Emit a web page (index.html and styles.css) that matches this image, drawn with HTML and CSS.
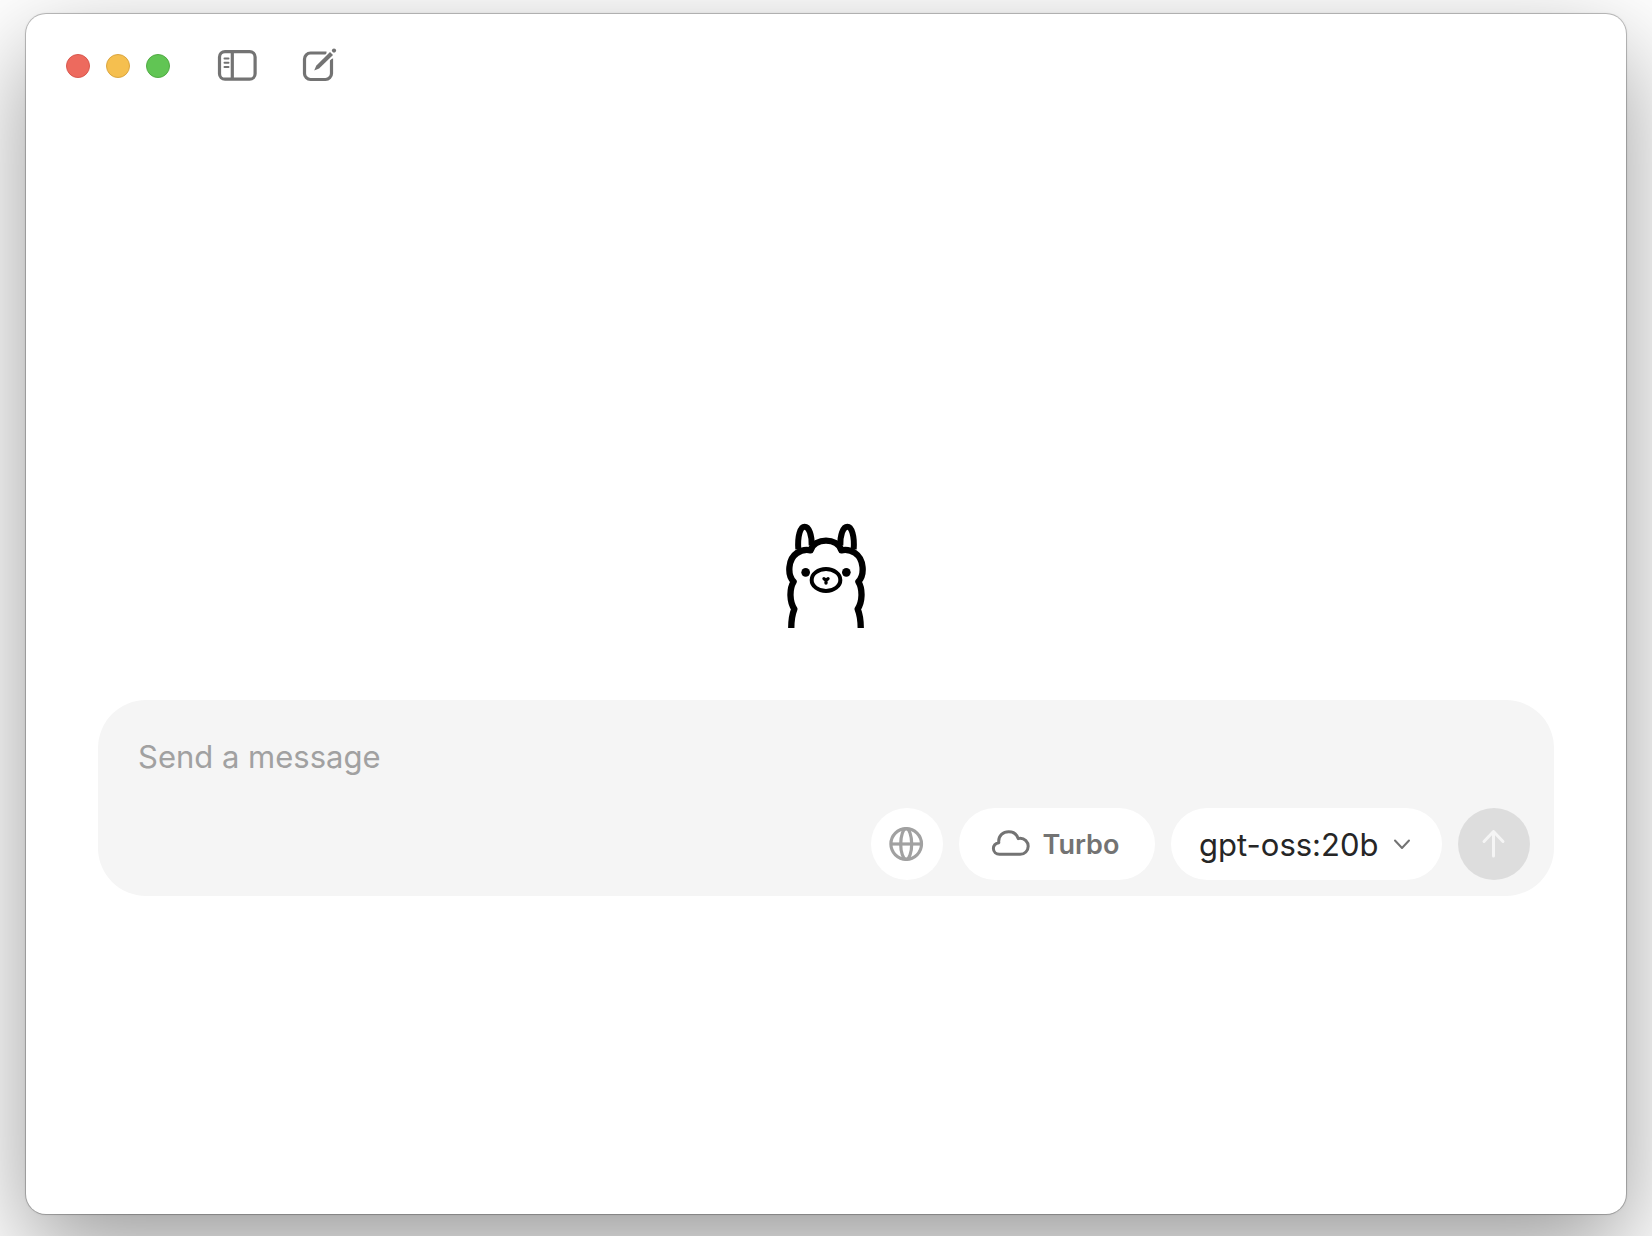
FILE: index.html
```
<!DOCTYPE html>
<html lang="en">
<head>
  <meta charset="UTF-8" />
  <meta name="viewport" content="width=device-width, initial-scale=1.0"/>
  <title>Ollama</title>
  <link rel="stylesheet" href="styles.css">
</head>
<body>

  <div class="window">
    <header class="titlebar">
      <div class="lights">
        <button class="light close" aria-label="Close"></button>
        <button class="light minimize" aria-label="Minimize"></button>
        <button class="light zoom" aria-label="Zoom"></button>
      </div>

      <button class="icon-btn sidebar-btn" aria-label="Toggle sidebar">
        <svg width="40" height="36" viewBox="0 0 40 36" fill="none" stroke="currentColor" stroke-width="3.2">
          <rect x="2.500" y="3.600" width="35.600" height="27.600" rx="5.500"/>
          <path d="M15.300 4v27"/>
          <path d="M7.500 10.500h4M7.500 14.700h4M7.500 19h4" stroke-width="2" stroke-linecap="round"/>
        </svg>
      </button>

      <button class="icon-btn" aria-label="New chat">
        <svg width="36" height="36" viewBox="0 0 36 36" fill="none" stroke="currentColor" stroke-width="3.2">
          <path d="M25.500 5H9.500a6 6 0 0 0-6 6v14.500a6 6 0 0 0 6 6h15a6 6 0 0 0 6-6V10.500"/>
          <path d="M13.500 22.300l2-4.300L30 2.500l4 4-16.800 14.300z" stroke="#fff" stroke-width="2.500" fill="#fff"/>
          <path d="M13.200 22.500l2-4.800L29 3.900l3 3-13.900 13.700z" fill="currentColor" stroke="none"/>
          <circle cx="33" cy="2.600" r="2.100" fill="currentColor" stroke="none"/>
        </svg>
      </button>
    </header>

    <main class="chat">
      <svg class="logo" width="82" height="106" viewBox="45 36 246 318" fill="none" stroke="#000" stroke-width="19" stroke-linejoin="round">
        <!-- ears -->
        <path d="M85 118C82 78 91 50 104 50C117 50 126 75 125 107" stroke-width="18"/>
        <path d="M251 118C254 78 245 50 232 50C219 50 210 75 211 107" stroke-width="18"/>
        <!-- wool -->
        <path d="M64 362C63 336 66 315 73 297C59 277 57 238 71 215C51 194 54 147 81 129C94 120 108 118 122 121C134 82 202 82 214 121C228 118 242 120 255 129C282 147 285 194 265 215C279 238 277 277 263 297C270 315 273 336 272 362"/>
        <!-- face -->
        <circle cx="107" cy="187" r="13" fill="#000" stroke="none"/>
        <circle cx="229" cy="187" r="13" fill="#000" stroke="none"/>
        <ellipse cx="168" cy="210" rx="43" ry="33" stroke-width="12"/>
        <path d="M162 206l6 5 6-5M168 211v8" stroke-width="10" stroke-linecap="round"/>
      </svg>

      <form class="composer">
        <textarea class="message" rows="1" placeholder="Send a message" aria-label="Message"></textarea>

        <div class="actions">
          <button type="button" class="pill round globe" aria-label="Web search">
            <svg width="36" height="36" viewBox="0 0 36 36" fill="none" stroke="currentColor" stroke-width="3.2">
              <circle cx="17.200" cy="18" r="15.300"/>
              <ellipse cx="17.200" cy="18" rx="5.500" ry="15.300"/>
              <path d="M2.200 18h30"/>
            </svg>
          </button>

          <button type="button" class="pill turbo">
            <svg width="40" height="32" viewBox="0 0 40 32" fill="none" stroke="currentColor" stroke-width="3" stroke-linejoin="round">
              <path d="M8.500 26.300H29.200a8 8 0 0 0 0-16c-.800 0-1.400.1-2 .3C25.800 6.200 22 3.700 17.700 3.700c-5.800 0-10 4-10 9.500 0 .6 0 1.100.1 1.500C4.600 15.300 2.400 17.600 2.400 20.600c0 3.300 2.700 5.700 6.100 5.700z"/>
            </svg>
            Turbo
          </button>

          <div class="model">
            <select class="pill model-select" aria-label="Model">
              <option>gpt-oss:20b</option>
            </select>
            <svg class="chevron" width="20" height="12" viewBox="0 0 20 12" fill="none" stroke="currentColor" stroke-width="2" stroke-linecap="round" stroke-linejoin="round">
              <path d="M3 2.500l7 7.500L17 2.500"/>
            </svg>
          </div>

          <button type="submit" class="pill round send" aria-label="Send" disabled>
            <svg width="28" height="32" viewBox="0 0 28 32" fill="none" stroke="currentColor" stroke-width="3" stroke-linecap="round" stroke-linejoin="round">
              <path d="M13.500 28V3.500M4 13.500l9.500-10 9.500 10"/>
            </svg>
          </button>
        </div>
      </form>
    </main>
  </div>

</body>
</html>
```
FILE: styles.css
```
* {
  box-sizing: border-box;
}

body {
  margin: 0;
  min-height: 100vh;
  padding: 14px 26px 22px;
  display: flex;
  overflow: hidden;
  background: #fff;
  font-family: Inter, "Liberation Sans", sans-serif;
}

button, select, textarea {
  font-family: inherit;
  border: none;
  margin: 0;
}

button {
  padding: 0;
}

.window {
  flex: 1;
  display: flex;
  flex-direction: column;
  background: #fff;
  border-radius: 20px;
  box-shadow: 0 0 0 1px rgba(0,0,0,0.2), 0 0 3px rgba(0,0,0,0.15), 0 36px 100px rgba(0,0,0,0.4);
}

.titlebar {
  display: flex;
  align-items: center;
  height: 104px;
  padding: 0 40px;
}

.lights {
  display: flex;
  gap: 16px;
}

.light {
  width: 24px;
  height: 24px;
  border-radius: 50%;
}

.close {
  background: #ed6a5e;
  border: 1px solid #d9584e;
}

.minimize {
  background: #f5bf4f;
  border: 1px solid #dba640;
}

.zoom {
  background: #61c554;
  border: 1px solid #51ab44;
}

.icon-btn {
  display: flex;
  background: none;
  color: #737373;
}

.sidebar-btn {
  margin: 0 44px 0 47px;
}

.chat {
  flex: 1;
  display: flex;
  flex-direction: column;
  align-items: center;
  justify-content: center;
  gap: 72px;
  padding: 86px 72px 0;
}

.composer {
  width: 100%;
  padding: 32px 24px 16px 40px;
  background: #f5f5f5;
  border-radius: 48px;
}

.message {
  display: block;
  width: 100%;
  height: 50px;
  padding: 0;
  margin-bottom: 26px;
  background: none;
  resize: none;
  outline: none;
  overflow: hidden;
  font-size: 31px;
  line-height: 50px;
}

.message::placeholder {
  color: #a1a1a1;
}

.actions {
  display: flex;
  justify-content: flex-end;
  gap: 16px;
}

.pill {
  display: flex;
  align-items: center;
  justify-content: center;
  height: 72px;
  background: #fff;
  border-radius: 36px;
}

.round {
  width: 72px;
}

.globe {
  color: #a1a1a1;
}

.turbo {
  gap: 12px;
  width: 196px;
  padding-right: 4px;
  color: #737373;
  font-size: 27px;
  font-weight: 600;
}

.model {
  display: grid;
  align-items: center;
}

.model > * {
  grid-area: 1 / 1;
}

.model-select {
  appearance: none;
  width: 271px;
  padding: 0 28px;
  color: #262626;
  font-size: 31px;
}

.chevron {
  justify-self: end;
  margin-right: 30px;
  color: #737373;
  pointer-events: none;
}

.send {
  background: #dddddd;
  color: #f5f5f5;
}
```
